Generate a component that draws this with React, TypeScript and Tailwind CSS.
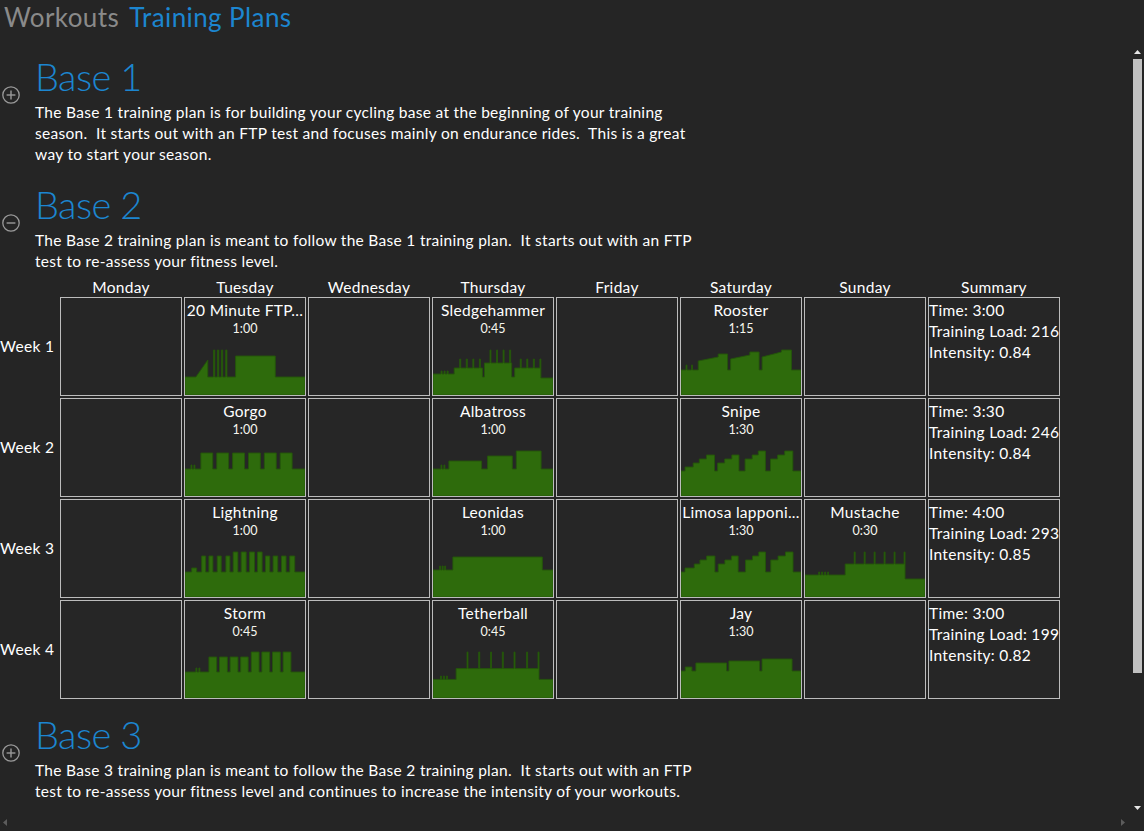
import React from "react";

type Seg = [number, number] | [number, number, number];

const CW = 120;
const CH = 50;

// step profile -> svg path, widths are normalised to the cell width
function buildPath(segs: Seg[]) {
  const total = segs.reduce((a, s) => a + s[0], 0);
  const k = CW / total;
  let x = 0;
  let d = `M0,${CH}`;
  for (const s of segs) {
    const h0 = s[1];
    const h1 = s.length === 3 ? s[2] : s[1];
    const x2 = x + s[0] * k;
    d += ` L${x.toFixed(2)},${(CH - h0).toFixed(2)} L${x2.toFixed(2)},${(CH - h1).toFixed(2)}`;
    x = x2;
  }
  d += ` L${CW},${CH} Z`;
  return d;
}

const spikes = (n: number, gap: number, base: number, top: number): Seg[] => {
  const out: Seg[] = [];
  for (let i = 0; i < n; i++) {
    out.push([gap, base]);
    out.push([1, top]);
  }
  return out;
};

const profiles: Record<string, Seg[]> = {
  ftp: [
    [11, 18], [12, 18, 35], [5.7, 18], [1.3, 45], [2.7, 18], [1.3, 45], [2.7, 18], [1.3, 45], [3, 18], [1.3, 45],
    [8.7, 18], [40, 39], [30, 18],
  ],
  sledgehammer: [
    [8, 21], [1, 24], [2, 21], [1, 24], [2, 21], [1, 24], [6, 21],
    ...spikes(4, 5.5, 27, 36), [2, 27], [2, 18],
    ...spikes(4, 5.5, 32, 45), [1, 32], [3, 18],
    ...spikes(4, 5.5, 27, 36), [12, 17],
  ],
  rooster: [
    [5, 25], [1, 30], [4.5, 25], [1, 30], [5.8, 25], [20, 34, 38], [9.4, 41], [3, 25], [19.3, 36, 40], [9.3, 43], [3, 25],
    [19.4, 38, 43], [10, 45], [9.6, 25],
  ],
  gorgo: [
    [6, 27], [1, 31], [2, 27], [1, 31], [6, 27], [12, 43], [4, 27], [12, 43], [4, 27], [12, 43], [4, 27], [12, 43], [4, 27],
    [12, 43], [4, 27], [12, 43], [13, 27],
  ],
  albatross: [[8, 27], [1, 31], [2, 27], [1, 31], [4, 27], [33, 35], [6, 27], [25, 40], [4, 27], [25, 45], [12, 27]],
  snipe: [
    [4, 25], [8, 29], [6, 33], [7, 37], [8, 41], [3, 25], [7, 33], [7, 37], [7, 41], [6, 25], [7, 37], [6, 41], [7, 45],
    [5, 25], [7, 37], [7, 41], [8, 45], [8, 25],
  ],
  lightning: [
    [6.7, 25], [5, 29], [5, 25], [4, 41], [3.3, 25], [4, 41], [4.3, 25], [4, 41], [4.7, 25], [4, 41], [3.3, 25],
    [4.7, 45], [3.3, 25], [5, 45], [3.4, 25], [5, 45], [3, 25], [4.6, 45], [3.4, 25], [4.3, 41], [3.3, 25],
    [4.7, 41], [3.7, 25], [4.6, 41], [3.7, 25], [5, 41], [10.3, 25],
  ],
  leonidas: [[6.7, 27], [1, 31], [1.5, 27], [1, 31], [1.5, 27], [1, 31], [7.3, 27], [90, 40], [10.7, 27]],
  limosa: [
    [4, 25], [9.3, 29], [5.7, 33], [6.7, 37], [8.3, 41], [3.3, 25], [6.7, 33], [6.7, 37], [6.6, 41], [7.4, 25], [7, 37],
    [6.3, 41], [6.7, 45], [5.3, 25], [7.3, 37], [7.4, 41], [7.6, 45], [8, 25],
  ],
  mustache: [
    [13.7, 22], [1, 25], [2, 22], [1, 25], [2, 22], [1, 25], [2, 22], [1, 25], [16.6, 22],
    ...spikes(6, 9, 33, 45), [20, 18],
  ],
  storm: [
    [11, 26], [1, 30], [2, 26], [1, 30], [9.1, 26], [7.9, 41], [2.8, 26], [7.9, 41], [2.8, 26], [7.9, 41], [2.7, 26],
    [7.6, 41], [3.1, 26], [7.9, 46], [2.8, 26], [7.9, 46], [2.8, 26], [7.9, 46], [2.8, 26], [7.9, 46], [14.2, 26],
  ],
  tetherball: [
    [7.5, 18.6], [1, 22], [2, 18.6], [1, 22], [2, 18.6], [1, 22], [8.8, 18.6],
    [11, 29.4], [1, 46], [10.8, 29.4], [1, 46], [10.9, 29.4], [1, 46], [10.9, 29.4], [1, 46], [10.8, 29.4], [1, 46],
    [11.7, 29.4], [1, 46], [10.5, 29.4], [1, 46], [14.1, 18.6],
  ],
  jay: [[4.3, 27], [6.7, 31], [4, 27], [31, 35], [2.3, 27], [31, 37], [2.4, 27], [30.3, 39], [9, 27]],
};

type Workout = { name: string; time: string; profile: string } | null;

const weeks: { days: Workout[]; summary: [string, string, string] }[] = [
  {
    days: [
      null,
      { name: "20 Minute FTP...", time: "1:00", profile: "ftp" },
      null,
      { name: "Sledgehammer", time: "0:45", profile: "sledgehammer" },
      null,
      { name: "Rooster", time: "1:15", profile: "rooster" },
      null,
    ],
    summary: ["Time: 3:00", "Training Load: 216", "Intensity: 0.84"],
  },
  {
    days: [
      null,
      { name: "Gorgo", time: "1:00", profile: "gorgo" },
      null,
      { name: "Albatross", time: "1:00", profile: "albatross" },
      null,
      { name: "Snipe", time: "1:30", profile: "snipe" },
      null,
    ],
    summary: ["Time: 3:30", "Training Load: 246", "Intensity: 0.84"],
  },
  {
    days: [
      null,
      { name: "Lightning", time: "1:00", profile: "lightning" },
      null,
      { name: "Leonidas", time: "1:00", profile: "leonidas" },
      null,
      { name: "Limosa lapponi...", time: "1:30", profile: "limosa" },
      { name: "Mustache", time: "0:30", profile: "mustache" },
    ],
    summary: ["Time: 4:00", "Training Load: 293", "Intensity: 0.85"],
  },
  {
    days: [
      null,
      { name: "Storm", time: "0:45", profile: "storm" },
      null,
      { name: "Tetherball", time: "0:45", profile: "tetherball" },
      null,
      { name: "Jay", time: "1:30", profile: "jay" },
      null,
    ],
    summary: ["Time: 3:00", "Training Load: 199", "Intensity: 0.82"],
  },
];

const dayNames = ["Monday", "Tuesday", "Wednesday", "Thursday", "Friday", "Saturday", "Sunday", "Summary"];

const ExpandIcon = ({ open }: { open: boolean }) => (
  <svg width="18" height="18" viewBox="0 0 18 18" className="block">
    <circle cx="9" cy="9" r="8.2" fill="none" stroke="#9a9a9a" strokeWidth="1.3" />
    <line x1="4.6" y1="9" x2="13.4" y2="9" stroke="#9a9a9a" strokeWidth="1.4" />
    {!open && <line x1="9" y1="4.6" x2="9" y2="13.4" stroke="#9a9a9a" strokeWidth="1.4" />}
  </svg>
);

const WorkoutCell = ({ w }: { w: Workout }) => (
  <div className="h-[99px] border border-[#bcbcbc] bg-[#262626] flex flex-col items-center overflow-hidden">
    {w && (
      <>
        <div className="mt-[2px] text-[15.5px] tracking-[0.3px] leading-[20px] text-white whitespace-nowrap">{w.name}</div>
        <div className="mt-[1px] text-[12.5px] leading-[15px] text-[#f6f6ee]">{w.time}</div>
        <svg width={CW} height={CH} viewBox={`0 0 ${CW} ${CH}`} className="block mt-auto">
          <path d={buildPath(profiles[w.profile])} fill="#2e6b0c" stroke="#24560a" strokeWidth="0.9" />
        </svg>
      </>
    )}
  </div>
);

const PlanHeader = ({ title, open, lines }: { title: string; open: boolean; lines: string[] }) => (
  <div className="flex">
    <div className="w-[35px] shrink-0 pl-[2px] pt-[36px]">
      <ExpandIcon open={open} />
    </div>
    <div>
      <div className="text-[38px] tracking-[-0.6px] leading-[52px] font-light text-[#1c86d0]">{title}</div>
      {lines.map((l, i) => (
        <div key={i} className="text-[15.5px] tracking-[0.3px] leading-[21px] text-white whitespace-pre">
          {l}
        </div>
      ))}
    </div>
  </div>
);

const App = () => {
  return (
    <div className="w-[1144px] h-[831px] bg-[#252525] flex flex-col overflow-hidden font-['Lato','Noto_Sans',sans-serif]">
      {/* top tabs */}
      <div className="h-[44px] shrink-0 flex gap-[10px] pl-[4px] text-[26px] tracking-[0.4px] leading-[34px]">
        <span className="text-[#8a8a8a]">Workouts</span>
        <span className="text-[#1c86d0]">Training Plans</span>
      </div>

      <div className="flex-1 flex min-h-0">
        <div className="flex-1 min-w-0 overflow-hidden pt-[6px]">
          <PlanHeader
            title="Base 1"
            open={false}
            lines={[
              "The Base 1 training plan is for building your cycling base at the beginning of your training",
              "season.  It starts out with an FTP test and focuses mainly on endurance rides.  This is a great",
              "way to start your season.",
            ]}
          />

          <div className="mt-[13px]">
            <PlanHeader
              title="Base 2"
              open={true}
              lines={[
                "The Base 2 training plan is meant to follow the Base 1 training plan.  It starts out with an FTP",
                "test to re-assess your fitness level.",
              ]}
            />
          </div>

          {/* plan calendar */}
          <div className="mt-[6px] grid grid-cols-[58px_repeat(7,122px)_132px] gap-x-[2px] h-[19px] text-[15.5px] tracking-[0.3px] leading-[19px] text-white">
            <div />
            {dayNames.map((d) => (
              <div key={d} className="text-center">
                {d}
              </div>
            ))}
          </div>
          <div className="grid grid-cols-[58px_repeat(7,122px)_132px] gap-[2px]">
            {weeks.map((wk, i) => (
              <React.Fragment key={i}>
                <div className="flex items-center pt-[1px] text-[15.5px] tracking-[0.3px] text-white whitespace-nowrap">Week {i + 1}</div>
                {wk.days.map((w, j) => (
                  <WorkoutCell key={j} w={w} />
                ))}
                <div className="h-[99px] border border-[#bcbcbc] bg-[#262626] pt-[2px] text-[15.5px] tracking-[0.3px] leading-[21px] text-white whitespace-nowrap">
                  {wk.summary.map((s) => (
                    <div key={s}>{s}</div>
                  ))}
                </div>
              </React.Fragment>
            ))}
          </div>

          <div className="mt-[9px]">
            <PlanHeader
              title="Base 3"
              open={false}
              lines={[
                "The Base 3 training plan is meant to follow the Base 2 training plan.  It starts out with an FTP",
                "test to re-assess your fitness level and continues to increase the intensity of your workouts.",
              ]}
            />
          </div>
        </div>

        {/* vertical scrollbar */}
        <div className="w-[17px] shrink-0 flex flex-col items-center pl-[4px]">
          <svg width="7" height="4" viewBox="0 0 7 4" className="mt-[6px]">
            <path d="M0,4 L3.5,0 L7,4 Z" fill="#e6e6e6" />
          </svg>
          <div className="mt-[5px] w-[9px] h-[614px] bg-[#c1c1c1]" />
          <div className="flex-1" />
          <svg width="7" height="4" viewBox="0 0 7 4" className="mb-[4px]">
            <path d="M0,0 L7,0 L3.5,4 Z" fill="#e6e6e6" />
          </svg>
        </div>
      </div>

      {/* horizontal scrollbar */}
      <div className="h-[17px] shrink-0 flex items-center justify-between pl-[3px] pr-[19px]">
        <svg width="4" height="7" viewBox="0 0 4 7">
          <path d="M4,0 L0,3.5 L4,7 Z" fill="#5c5c5c" />
        </svg>
        <svg width="4" height="7" viewBox="0 0 4 7">
          <path d="M0,0 L4,3.5 L0,7 Z" fill="#5c5c5c" />
        </svg>
      </div>
    </div>
  );
};

export default App;
